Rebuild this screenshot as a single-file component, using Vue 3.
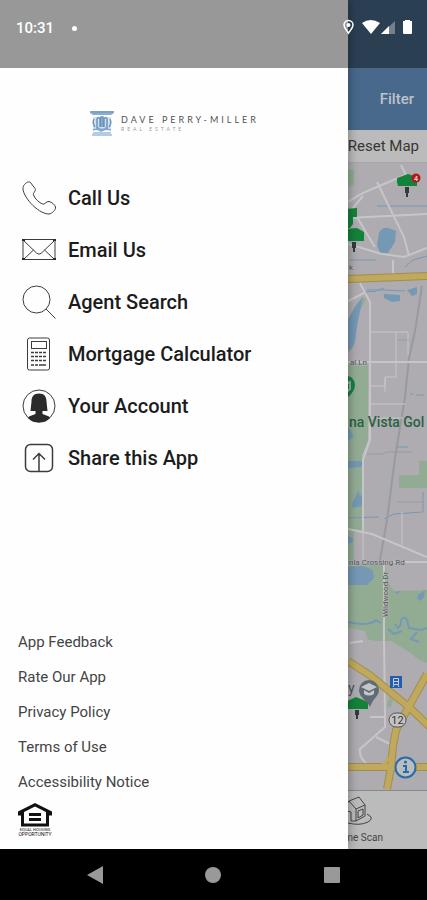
<script setup>
const menu = [
  { id: 'call', label: 'Call Us' },
  { id: 'email', label: 'Email Us' },
  { id: 'search', label: 'Agent Search' },
  { id: 'calculator', label: 'Mortgage Calculator' },
  { id: 'account', label: 'Your Account' },
  { id: 'share', label: 'Share this App' },
]
const links = ['App Feedback', 'Rate Our App', 'Privacy Policy', 'Terms of Use', 'Accessibility Notice']
</script>

<template>
  <div class="screen">
    <div class="stage">
      <aside class="drawer">
        <div class="brand">
          <svg class="pillar" viewBox="0 0 26 26" aria-hidden="true">
            <path d="M1 1h24v2l-3 2H4L1 3z" fill="#8aaed0" />
            <path d="M2 2h22" stroke="#6f94b8" />
            <path d="M4 7h18v13H4z" fill="#d3e1ee" />
            <path d="M8 19V9q1-3 3 0v8M12 17V7h2v10M15 17V9q2-3 3 0v10M5 9q-2 4 1 8M21 9q2 4-1 8" fill="none" stroke="#6a94be" stroke-width="1.5" />
            <path d="M8 17q5 5 10 0M4 20q4-2 8 1 5-3 10-1" fill="none" stroke="#7fa6cc" stroke-width="1.5" />
            <path d="M4 23h18M3 25h20" stroke="#6c98c2" />
          </svg>
          <div class="brand-text">
            <span class="brand-name">DAVE PERRY-MILLER</span>
            <span class="brand-sub">REAL ESTATE</span>
          </div>
        </div>

        <nav class="menu">
          <a v-for="item in menu" :key="item.id" class="menu-item" href="#">
            <svg class="menu-icon" viewBox="0 0 34 34" aria-hidden="true">
              <path v-if="item.id === 'call'" d="M2.500 3.500C4 1.500 7 0 8.500 1.500L13 7.500C14.500 10 10.500 12 11.500 14C13 18 17 21.500 20.500 23C23 24 24 20 27 20.500C30 21 33 24 33.500 26C34 29 30 32.500 27 33C21 33 14 28 9 22.500C5 18 1 12 1 7.500C1 6 1.500 4.500 2.500 3.500Z" />
              <g v-else-if="item.id === 'email'">
                <rect x="1" y="6.500" width="32" height="20" />
                <path d="M1 7L14.500 20Q17 22.500 19.500 20L33 7M1 27L11.500 17M33 27L22.500 17" />
                <path class="solid" d="M0 6h3v2H0zM31 6h3v2h-3zM0 25h3v2H0zM31 25h3v2h-3z" />
              </g>
              <g v-else-if="item.id === 'search'">
                <circle cx="14.500" cy="14.500" r="13.500" />
                <path d="M24 24L33.500 33.500" />
              </g>
              <g v-else-if="item.id === 'calculator'">
                <rect x="5.500" y="1" width="22" height="32" rx="2" />
                <rect x="9.500" y="4.500" width="15" height="7" />
                <path class="keys" d="M9 15.500h15M9 19.500h15M9 23.500h15M9 28h7" />
                <path class="keys-solid" d="M17 28h7" />
              </g>
              <g v-else-if="item.id === 'account'">
                <circle cx="17" cy="17" r="16" />
                <path class="solid" d="M17 4.500C11.500 4.500 9.500 8 9.500 12.500L8.500 22H13.500V25L7 27.500L6 29Q10 33.500 17 33.500T28 29L27 27.500L20.500 25V22H25.500L24.500 12.500C24.500 8 22.500 4.500 17 4.500Z" />
              </g>
              <g v-else>
                <rect class="frame" x="3.500" y="3.500" width="27" height="27" rx="5" />
                <path class="arrow" d="M17 30V13M11 18.500L17 12.500L23 18.500" />
              </g>
            </svg>
            <span>{{ item.label }}</span>
          </a>
        </nav>

        <footer class="legal">
          <a v-for="link in links" :key="link" class="legal-link" href="#">{{ link }}</a>
          <svg class="housing" viewBox="0 0 34 34" role="img" aria-label="Equal Housing Opportunity">
            <path fill-rule="evenodd" d="M17 0L0 8.500V12.500H3V23.500H31V12.500H34V8.500ZM17 3.500L28 9V20.500H6V9Z" />
            <path d="M11 10h12v3H11zM11 15h12v3H11z" />
            <text x="17" y="28" class="housing-small">EQUAL HOUSING</text>
            <text x="17" y="33" class="housing-large">OPPORTUNITY</text>
          </svg>
        </footer>
      </aside>

      <main class="behind">
        <header class="app-bar">
          <button class="filter" type="button">Filter</button>
        </header>
        <div class="tools">
          <button class="reset" type="button">Reset Map</button>
        </div>
        <div class="map">
          <svg viewBox="348 163 79 627" preserveAspectRatio="xMidYMid slice" role="img" aria-label="Map">
            <rect x="300" y="100" width="200" height="750" fill="#aeacb0" />
            <g fill="#92ac94">
              <path d="M348 170l6-1v16l-6 2z" />
              <path d="M348 364h20v76l-6 23v101h-14z" />
              <path d="M348 564h37l5 22 4 5 33-1v73l-8-3-10-8-18-11h-15l-28-6z" />
              <path d="M399 475h20v-14h8v27h-28z" />
              <path d="M362 297l4 2-9 18-5 33-4 3v-35z" />
              <path d="M389 697l4 3-2 8-4-2z" />
            </g>
            <path d="M354 532h9v32h-9z" fill="#aeacb0" />
            <path d="M348 628l17 3 4 13-9 7-12-4z" fill="#aeacb0" />
            <g fill="#7598b5">
              <path d="M379 233q3-6 9-5l8 3-1 11-7 11h-8l-3-8z" />
              <path d="M384 294l16 1v6l-8 1-8-4zM407 290l10-3v7l-5 2z" />
              <path d="M363 297l-7 8-8 15v31q8-4 8-18 2-14 7-36z" />
              <path d="M348 461h14v6l-14 1zM352 504l7-15v5l3 2v10l-9 2zM348 536l5 2-1 5h-4z" />
              <path d="M348 567q17-3 25 4l1 7-7 7h-19z" />
              <path d="M348 427q5 6 5 10l-5 4zM418 595l7-5-1 7-4 4-3-3zM394 592l6-1-2 3z" />
            </g>
            <g fill="none" stroke="#7598b5">
              <path d="M384 288q-10 5-20 4M377 206h50M348 518l31-1M384 519l10-5 29-2v-20M396 447h12" />
              <path d="M350 260h26M405 267l8-7 14-4M367 290h18l20 1M410 394h3M416 395h8" />
              <path d="M348 622q21 5 28-2l5 3M395 624l3 4q4-3 3-8 4-5 6 0l2 8 12 2 6-2" stroke-width="2" />
              <path d="M388 629l6 5 8-3M417 632l-6 7 8 3" stroke-width="2" />
            </g>
            <g fill="none" stroke="#999a9f">
              <path d="M422 286l-7 45-6 27-4 39-10 61-8 62-7 40v6" stroke-width="2" />
              <path d="M367 454h15l5-2h25M397 502h27M397 340h13" />
            </g>
            <g fill="none" stroke="#c6c5c8">
              <path d="M360 283l10 19v31l-1 107-6 15v76M369 332h39v23M396 332v45h-11v9h-15M369 404h37M369 418h34M385 377v15M402 512v34M363 530v33" />
              <path d="M348 202l15-9 35-15 8-3 5 4M401 165l6 12M377 182l27 55 5 19M363 196l-11 13 23 38M348 218l79-4M348 244l34 10 22 3 23-9M393 260v15M348 301l16-8" stroke-width="2" />
              <path d="M348 362h79M348 529l24 5 55 23M375 562h52M384 564v75l1 78" stroke-width="2" />
              <path d="M360 283l10 19v138l-7 20v70M385 717h-15M385 717v10l-25 22q-1 8 6 14M376 737l16 8M363 641l-13 2" stroke-width="2" />
            </g>
            <g fill="none">
              <path d="M348 279l79-3M348 767h79M348 661l23 15 23 19 15 12 23 22M427 674l-20 36-11 20-3 16-2 21-4 22" stroke="#a18e4d" stroke-width="8" />
              <path d="M348 279l79-3M348 767h79M348 661l23 15 23 19 15 12 23 22M427 674l-20 36-11 20-3 16-2 21-4 22" stroke="#c0a95d" stroke-width="6" />
              <path d="M380 766q7-2 8-9" stroke="#c0a95d" stroke-width="3" />
            </g>
            <g fill="#13833a">
              <path d="M397 178l11-4 9 3v9h-19l-1-4z" />
              <path d="M345 209l12-1v9h-4v7l-3 4h-5z" />
              <path d="M346 229l11-1 7 4v9h-18z" />
              <path d="M345 702l11-5 12 5v7h-20z" />
            </g>
            <g fill="#343b3c">
              <path d="M405 187h4v6h-1v4h-2v-4h-1zM352 242h4v6h-1v4h-2v-4h-1zM355 710h4v5h-1v4h-2v-4h-1z" />
            </g>
            <circle cx="416" cy="178" r="4.500" fill="#b3181e" />
            <text x="416" y="181" class="pin-count">4</text>
            <path d="M342 376q12-2 13 9 0 8-13 17z" fill="#168047" />
            <path d="M345 384l5-2v7l-5 4" fill="none" stroke="#9ab19b" stroke-width="2" />
            <text x="349" y="427" class="place">na Vista Gol</text>
            <text x="350" y="365" class="road">al Ln</text>
            <text x="349" y="565" class="road">nia Crossing Rd</text>
            <text transform="translate(388 617) rotate(-90)" class="road">Wildwood Dr</text>
            <text x="349" y="270" class="road">k</text>
            <text x="348" y="693" class="school">y</text>
            <path d="M369 680a10 10 0 0 1 10 10c0 6-6 8-9 17-2-6-11-9-11-17a10 10 0 0 1 10-10z" fill="#606b73" />
            <path d="M369 683l-8 4 8 4 8-4zM364 690v4q5 3 10 0v-4l-5 3z" fill="#c4c7ca" />
            <rect x="390" y="676" width="12" height="12" fill="#235eab" />
            <path d="M393.500 678.500h5v6h-5zM394 685l-1 2M398 685l1 2M393 681.500h5" fill="#235eab" stroke="#c4d2df" />
            <rect x="389" y="713" width="17" height="14" rx="7" fill="#c4c4c4" stroke="#555" />
            <text x="397.500" y="724" class="route">12</text>
            <circle cx="405.500" cy="767.500" r="10" fill="#b9bdc0" stroke="#286ba9" stroke-width="2" />
            <path d="M403 766h3v6M403 772h6" fill="none" stroke="#286ba9" stroke-width="2" />
            <circle cx="405.500" cy="762" r="1.500" fill="#286ba9" />
          </svg>
        </div>
        <div class="tab-bar">
          <a class="tab" href="#">
            <svg viewBox="0 0 32 30" aria-hidden="true">
              <path d="M2 14L8 5L18 1L24 9V20L15 25V13L8 5M15 13L24 9M2 12v10l4 2v-9l4 1v9l5 0M17 15l5-2v6l-5 3z" />
              <path d="M26 18q8 4 1 8-8 4-20 1" />
            </svg>
            <span>Home Scan</span>
          </a>
        </div>
      </main>
    </div>

    <div class="status">
      <div class="status-left">
        <span>10:31</span>
        <i class="dot"></i>
      </div>
      <svg class="status-icons" viewBox="0 0 70 16" aria-hidden="true">
        <path d="M6.500 1.500a4.500 4.500 0 0 1 4.500 4.500c0 3-3 5.500-4.500 8C5 11.500 2 9 2 6a4.500 4.500 0 0 1 4.500-4.500z" fill="none" stroke="#fff" stroke-width="1.500" />
        <circle cx="6.500" cy="6" r="2" fill="#fff" />
        <path d="M20 4Q28.500-2 38 4L29 15z" fill="#fff" />
        <path d="M39 15L53 2V15z" fill="#74818d" />
        <path d="M39 15L47 7V15z" fill="#fff" />
        <path d="M61 2h2V1h5v1h2v12q0 1-1 1h-7q-1 0-1-1z" fill="#fff" />
      </svg>
    </div>

    <div class="system-nav">
      <button type="button" aria-label="Back"><svg viewBox="0 0 18 20"><path d="M1 10L17 1V19z" /></svg></button>
      <button type="button" aria-label="Home"><svg viewBox="0 0 18 20"><circle cx="9" cy="10" r="8" /></svg></button>
      <button type="button" aria-label="Recent apps"><svg viewBox="0 0 18 20"><rect x="1" y="2" width="16" height="16" rx="1" /></svg></button>
    </div>
  </div>
</template>

<style>
body {
  margin: 0;
  background: #000;
}
</style>

<style scoped>
.screen {
  position: relative;
  display: flex;
  flex-direction: column;
  min-height: 100vh;
  font-family: Roboto, "Liberation Sans", sans-serif;
}
a {
  color: inherit;
  text-decoration: none;
}
button {
  border: 0;
  padding: 0;
  background: none;
  font-family: inherit;
}
svg {
  display: block;
}
.stage {
  flex: 1;
  display: grid;
  grid-template-columns: minmax(0, 1fr) 79px;
}
.drawer {
  z-index: 1;
  display: flex;
  flex-direction: column;
  padding: 110px 0 12px;
  background: #fefefe;
  box-shadow: 0 0 10px rgba(0, 0, 0, 0.4);
}
.brand {
  display: flex;
  justify-content: center;
  gap: 6px;
}
.pillar {
  width: 26px;
  height: 26px;
}
.brand-text {
  display: flex;
  flex-direction: column;
  padding-top: 4px;
  color: #505457;
  font-family: Lato, sans-serif;
}
.brand-name {
  font-size: 9px;
  line-height: 12px;
  letter-spacing: 3px;
  white-space: nowrap;
}
.brand-sub {
  color: #999;
  font-size: 5px;
  line-height: 7px;
  letter-spacing: 3px;
}
.menu {
  display: flex;
  flex-direction: column;
  padding: 36px 22px 0;
}
.menu-item {
  display: flex;
  align-items: center;
  gap: 12px;
  height: 52px;
  color: #1c1c1c;
  font-size: 20px;
  font-weight: 500;
  white-space: nowrap;
}
.menu-icon {
  width: 34px;
  height: 34px;
  fill: none;
  stroke: #3c3c3c;
  stroke-width: 1;
}
.solid {
  fill: #2b2b2b;
  stroke: none;
}
.keys {
  stroke-width: 1.5;
  stroke-dasharray: 3 1;
}
.keys-solid {
  stroke-width: 1.5;
}
.frame,
.arrow {
  stroke-width: 1.5;
}
.legal {
  display: flex;
  flex-direction: column;
  margin-top: auto;
  padding: 0 18px;
}
.legal-link {
  color: #444;
  font-size: 15px;
  line-height: 35px;
}
.housing {
  width: 34px;
  height: 34px;
  margin-top: 3px;
  fill: #111;
}
.housing-small {
  font-size: 4px;
  text-anchor: middle;
}
.housing-large {
  font-size: 5px;
  text-anchor: middle;
}
.behind {
  display: flex;
  flex-direction: column;
  overflow: hidden;
}
.app-bar {
  display: flex;
  align-items: center;
  justify-content: flex-end;
  height: 62px;
  padding: 68px 13px 0 0;
  background: #48698b;
}
.filter {
  color: #bdc3ca;
  font-size: 15px;
  font-weight: 500;
}
.tools {
  display: flex;
  align-items: center;
  justify-content: flex-end;
  height: 32px;
  padding-right: 8px;
  border-bottom: 1px solid #a7a7a7;
  background: #bbb;
}
.reset {
  color: #363636;
  font-size: 15px;
  white-space: nowrap;
}
.map {
  flex: 1 0 627px;
  overflow: hidden;
}
.map svg {
  width: 100%;
  height: 100%;
}
.pin-count {
  fill: #e0c8c8;
  font-size: 7px;
  font-weight: 700;
  text-anchor: middle;
}
.place {
  fill: #286343;
  font-size: 14px;
  font-weight: 500;
}
.road {
  fill: #55565a;
  stroke: #b9b8bb;
  stroke-width: 1px;
  paint-order: stroke;
  font-size: 8px;
}
.school {
  fill: #4d5358;
  font-size: 14px;
}
.route {
  fill: #333;
  font-size: 11px;
  text-anchor: middle;
}
.tab-bar {
  display: flex;
  justify-content: flex-end;
  height: 58px;
  border-top: 1px solid #888;
  background: #bbb;
}
.tab {
  display: flex;
  flex-direction: column;
  align-items: flex-end;
  gap: 6px;
  padding: 5px 44px 0 0;
  color: #454545;
  font-size: 10px;
  line-height: 12px;
  white-space: nowrap;
}
.tab svg {
  width: 32px;
  height: 30px;
  margin-right: 10px;
  fill: none;
  stroke: #454545;
}
.status {
  position: absolute;
  z-index: 2;
  top: 0;
  left: 0;
  right: 0;
  box-sizing: border-box;
  display: flex;
  align-items: flex-start;
  justify-content: space-between;
  height: 68px;
  padding: 19px 15px 0 16px;
  background: rgba(0, 0, 0, 0.4);
  color: #fff;
}
.status-left {
  display: flex;
  align-items: center;
  gap: 18px;
  font-size: 15px;
  font-weight: 500;
  line-height: 18px;
}
.dot {
  width: 5px;
  height: 5px;
  border-radius: 50%;
  background: #fff;
}
.status-icons {
  width: 70px;
  height: 16px;
}
.system-nav {
  display: grid;
  grid-template-columns: repeat(3, 1fr);
  height: 51px;
  padding: 0 36px;
  background: #000;
}
.system-nav button {
  display: flex;
  align-items: center;
  justify-content: center;
}
.system-nav svg {
  width: 18px;
  height: 20px;
  fill: #999;
}
</style>
